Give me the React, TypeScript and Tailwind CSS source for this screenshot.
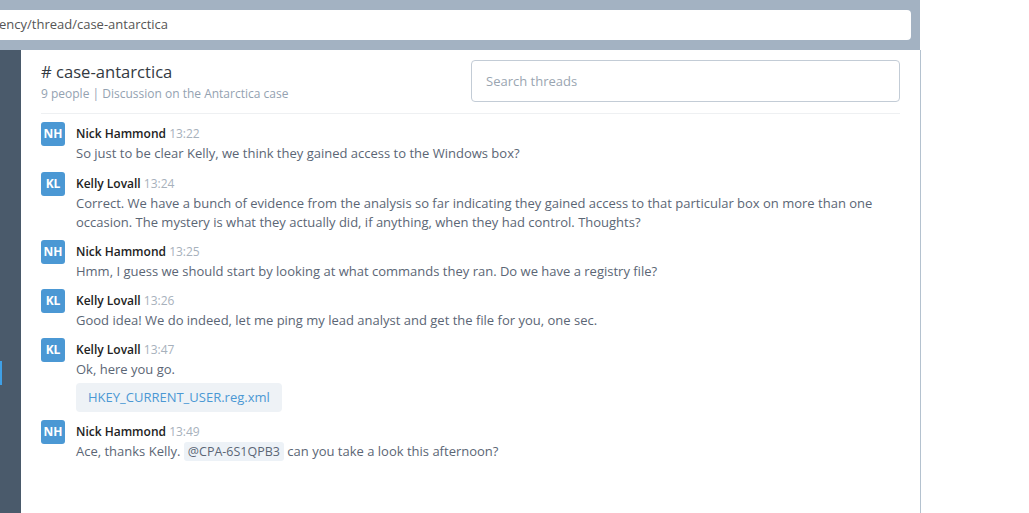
import React from "react";

type Msg = {
  initials: string;
  name: string;
  time: string;
  text: React.ReactNode;
  file?: string;
};

const messages: Msg[] = [
  { initials: "NH", name: "Nick Hammond", time: "13:22", text: "So just to be clear Kelly, we think they gained access to the Windows box?" },
  {
    initials: "KL",
    name: "Kelly Lovall",
    time: "13:24",
    text: (
      <>
        Correct. We have a bunch of evidence from the analysis so far indicating they gained access to that particular box on more than one
        <br />
        occasion. The mystery is what they actually did, if anything, when they had control. Thoughts?
      </>
    ),
  },
  { initials: "NH", name: "Nick Hammond", time: "13:25", text: "Hmm, I guess we should start by looking at what commands they ran. Do we have a registry file?" },
  { initials: "KL", name: "Kelly Lovall", time: "13:26", text: "Good idea! We do indeed, let me ping my lead analyst and get the file for you, one sec." },
  { initials: "KL", name: "Kelly Lovall", time: "13:47", text: "Ok, here you go.", file: "HKEY_CURRENT_USER.reg.xml" },
  {
    initials: "NH",
    name: "Nick Hammond",
    time: "13:49",
    text: (
      <>
        Ace, thanks Kelly.{" "}
        <span className="rounded-[3px] bg-[#edf2f7] px-[4px] py-[1px] text-[12.5px] text-[#5b6675]">@CPA-6S1QPB3</span> can you take a look this afternoon?
      </>
    ),
  },
];

function Message({ m, first }: { m: Msg; first?: boolean }) {
  return (
    <div className={first ? "mb-[9px] flex" : "mb-[8px] flex"}>
      <div className="flex h-[24px] w-[24px] shrink-0 items-center justify-center rounded-[3px] bg-[#4b98d4] text-[12px] font-bold leading-none text-white">
        {m.initials}
      </div>
      <div className="ml-[11px] flex flex-col">
        <div className="h-[22px] pt-[2px] text-[12px] leading-[20px]">
          <span className="font-semibold text-[#222]">{m.name}</span>{" "}
          <span className="text-[#a7b1bc]">{m.time}</span>
        </div>
        <div className="text-[13px] leading-[19px] text-[#5b6675]">{m.text}</div>
        {m.file && (
          <div className="mt-[4px] flex h-[29px] w-fit items-center rounded-[4px] bg-[#eef2f6] px-[12px] text-[13px] text-[#4b98d4]">
            {m.file}
          </div>
        )}
      </div>
    </div>
  );
}

export default function App() {
  return (
    <div
      className="flex h-[513px] w-[1029px] flex-col overflow-hidden bg-white"
      style={{ fontFamily: '"Open Sans", "Noto Sans", sans-serif' }}
    >
      <div className="h-[50px] w-[920px] shrink-0 bg-[#a3b2c2] pr-[9px] pt-[10px]">
        <div className="flex h-[30px] items-center rounded-r-[4px] bg-white text-[13px] text-[#555]">
          <span className="-ml-[1px]">ency/thread/case-antarctica</span>
        </div>
      </div>
      <div className="flex flex-1">
        <div className="relative w-[21px] shrink-0 bg-[#4a5a6b]">
          <div className="absolute left-0 top-[311px] h-[24px] w-[2px] bg-[#3fa0e6]" />
        </div>
        <div className="w-[900px] shrink-0 border-r border-[#b4c2cf] px-[20px]">
          <div className="flex justify-between border-b border-[#eef0f2] pb-[11px] pt-[10px]">
            <div className="flex flex-col">
              <div className="text-[16.6px] leading-[24px] text-[#333a42]"># case-antarctica</div>
              <div className="mt-[2px] text-[12px] leading-[16px] text-[#94a2b1]">9 people | Discussion on the Antarctica case</div>
            </div>
            <div className="flex h-[42px] w-[429px] items-center rounded-[4px] border border-[#c3ccd6] pl-[14px] pt-[2px] text-[13px] text-[#9aa5b1]">
              Search threads
            </div>
          </div>
          <div className="pt-[8px]">
            {messages.map((m, i) => (
              <Message key={i} m={m} first={i === 0} />
            ))}
          </div>
        </div>
        <div className="flex-1" />
      </div>
    </div>
  );
}
